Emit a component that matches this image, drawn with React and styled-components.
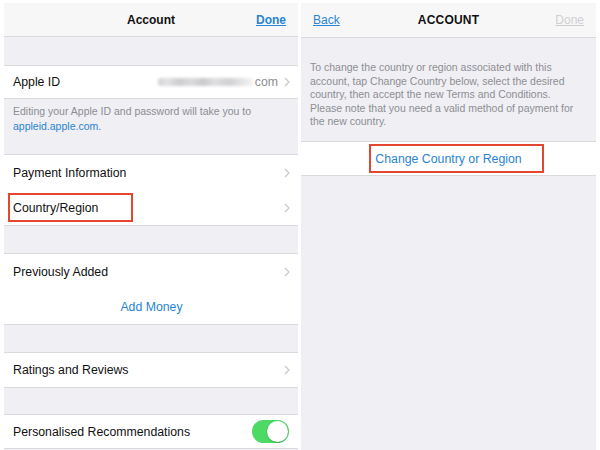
import React from 'react';
import styled, { createGlobalStyle } from 'styled-components';

const BLUE = '#2a84d2';
const GRAY_BG = '#efeff4';
const LINE = '#d9d9de';
const RED = '#e4472f';

const GlobalStyle = createGlobalStyle`
  html, body {
    margin: 0;
    padding: 0;
    background: #fff;
    overflow: hidden;
  }
  body {
    font-family: "Liberation Sans", Arial, sans-serif;
    -webkit-font-smoothing: antialiased;
  }
`;

const Page = styled.div`
  display: flex;
  gap: 3px;
  padding: 3px 0 0 4px;
  width: 600px;
  height: 450px;
  box-sizing: border-box;
  overflow: hidden;
`;

const Panel = styled.div`
  width: ${p => p.width}px;
  height: 460px;
  background: ${GRAY_BG};
  display: flex;
  flex-direction: column;
`;

const NavBar = styled.div`
  height: ${p => p.height || 33}px;
  flex-shrink: 0;
  background: #f7f7f7;
  border-bottom: 1px solid ${LINE};
  display: grid;
  grid-template-columns: 1fr auto 1fr;
  align-items: center;
  padding: 0 10px;
`;

const NavTitle = styled.div`
  font-size: 12px;
  font-weight: bold;
  color: #111;
  letter-spacing: ${p => (p.caps ? '0.2px' : '0')};
`;

const NavLink = styled.a`
  font-size: 12px;
  font-weight: ${p => (p.bold ? 'bold' : 'normal')};
  color: ${p => (p.disabled ? '#cfcfd3' : BLUE)};
  text-decoration: underline;
  justify-self: ${p => (p.right ? 'end' : 'start')};
  ${p => (p.right ? 'margin-right: 2px;' : 'margin-left: 2px;')}
`;

const Spacer = styled.div`
  height: ${p => p.h}px;
  flex-shrink: 0;
`;

const Group = styled.div`
  background: #fff;
  border-top: 1px solid ${LINE};
  border-bottom: 1px solid ${LINE};
  flex-shrink: 0;
`;

const Row = styled.div`
  height: ${p => p.h || 35}px;
  display: flex;
  align-items: center;
  justify-content: ${p => (p.center ? 'center' : 'space-between')};
  padding: 0 8px 0 ${p => (p.padLeft != null ? p.padLeft : 9)}px;
  box-sizing: border-box;
  position: relative;
  font-size: 12.3px;
  color: #111;
  & + & {
    box-shadow: inset 8px 1px 0 #fff, inset 0 1px 0 ${LINE};
  }
`;

const RowValue = styled.div`
  display: flex;
  align-items: center;
  gap: 4px;
  color: #8e8e93;
`;

const Blur = styled.div`
  width: 95px;
  height: 8px;
  margin-right: -2px;
  border-radius: 3px;
  background: linear-gradient(90deg, #d2d2d5 0%, #e2e2e4 10%, #cdcdd0 22%, #dadadc 35%, #c9c9cc 48%, #dfdfe1 60%, #d0d0d3 75%, #e6e6e8 90%, #f4f4f5 100%);
  filter: blur(1.8px);
`;

const LinkText = styled.span`
  color: ${BLUE};
  font-size: ${p => p.size || 12.3}px;
`;

const Footer = styled.div`
  height: ${p => p.h}px;
  flex-shrink: 0;
  box-sizing: border-box;
  padding: ${p => p.pad};
  font-size: ${p => p.size}px;
  line-height: ${p => p.lh}px;
  color: #8e8e93;
`;

const Highlight = styled.span`
  display: flex;
  align-items: center;
  box-sizing: border-box;
  height: 29px;
  border: 2px solid ${RED};
  padding: 0 ${p => p.padRight}px 0 ${p => p.padLeft}px;
`;

const SwitchTrack = styled.div`
  width: 37px;
  height: 23px;
  border-radius: 12px;
  background: #4cd964;
  position: relative;
  margin-right: 1px;
`;

const SwitchKnob = styled.div`
  position: absolute;
  right: 1px;
  top: 1px;
  width: 21px;
  height: 21px;
  border-radius: 50%;
  background: #fff;
  box-shadow: 0 0.5px 1.5px rgba(0, 0, 0, 0.3);
`;

const Chevron = () => (
  <svg width="6" height="10" viewBox="0 0 6 10" style={{ marginLeft: 2 }}>
    <polyline points="1,1 5,5 1,9" fill="none" stroke="#c7c7cc" strokeWidth="1.2" />
  </svg>
);

export default function App() {
  return (
    <>
      <GlobalStyle />
      <Page>
        <Panel width={294}>
          <NavBar>
            <span />
            <NavTitle>Account</NavTitle>
            <NavLink right bold>Done</NavLink>
          </NavBar>
          <Spacer h={28} />
          <Group>
            <Row h={32}>
              <span>Apple ID</span>
              <RowValue>
                <Blur />
                <span style={{ fontSize: 12.3 }}>com</span>
                <Chevron />
              </RowValue>
            </Row>
          </Group>
          <Footer h={55} size={10.5} lh={14.5} pad="5px 10px 0 9px">
            Editing your Apple ID and password will take you to <LinkText size={10.5}>appleid.apple.com.</LinkText>
          </Footer>
          <Group>
            <Row h={35}>
              <span>Payment Information</span>
              <Chevron />
            </Row>
            <Row h={35} padLeft={4}>
              <Highlight padLeft={3} padRight={0} style={{ width: 125 }}>
                Country/Region
              </Highlight>
              <Chevron />
            </Row>
          </Group>
          <Spacer h={27} />
          <Group>
            <Row h={35}>
              <span>Previously Added</span>
              <Chevron />
            </Row>
            <Row h={35} center>
              <LinkText>Add Money</LinkText>
            </Row>
          </Group>
          <Spacer h={27} />
          <Group>
            <Row h={34}>
              <span>Ratings and Reviews</span>
              <Chevron />
            </Row>
          </Group>
          <Spacer h={26} />
          <Group>
            <Row h={33}>
              <span>Personalised Recommendations</span>
              <SwitchTrack>
                <SwitchKnob />
              </SwitchTrack>
            </Row>
          </Group>
        </Panel>
        <Panel width={295}>
          <NavBar height={34}>
            <NavLink>Back</NavLink>
            <NavTitle caps>ACCOUNT</NavTitle>
            <NavLink right disabled>Done</NavLink>
          </NavBar>
          <Footer h={103} size={10.5} lh={13.5} pad="23px 18px 0 9px">
            To change the country or region associated with this account, tap Change Country below, select the desired country, then accept the new Terms and Conditions. Please note that you need a valid method of payment for the new country.
          </Footer>
          <Group>
            <Row h={33} center padLeft={24}>
              <Highlight padLeft={4} padRight={20}>
                <LinkText>Change Country or Region</LinkText>
              </Highlight>
            </Row>
          </Group>
        </Panel>
      </Page>
    </>
  );
}
